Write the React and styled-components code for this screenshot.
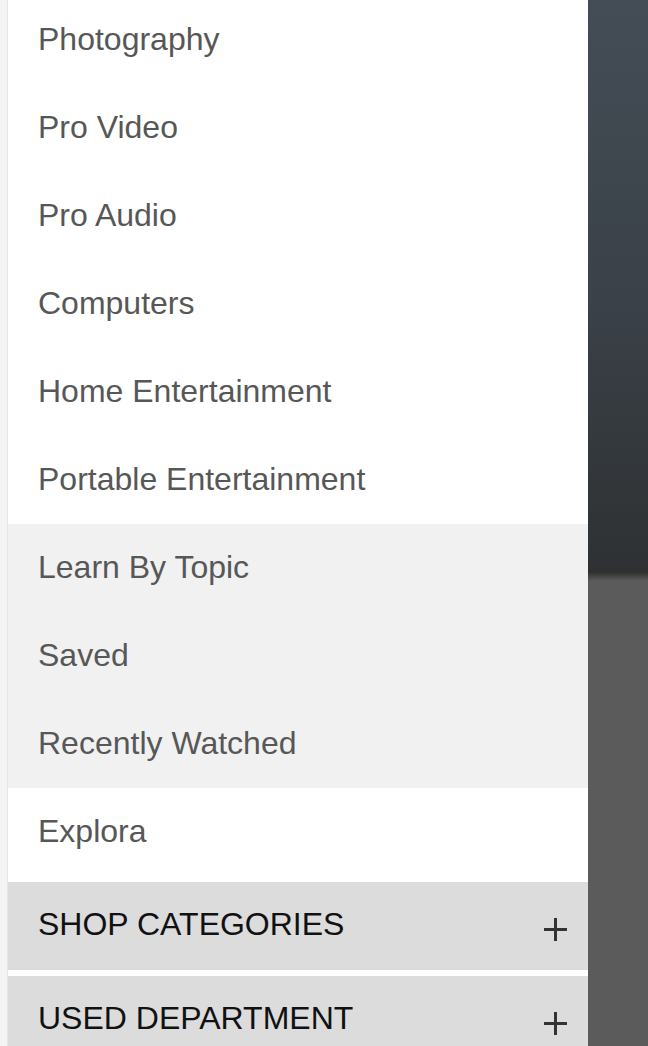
import React from "react";
import styled, { createGlobalStyle } from "styled-components";

const GlobalStyle = createGlobalStyle`
  html, body {
    margin: 0;
    padding: 0;
    overflow: hidden;
    background: #5c5c5c;
  }
`;

const Page = styled.div`
  display: flex;
  height: 1046px;
  overflow: hidden;
  font-family: "Liberation Sans", Arial, sans-serif;
`;

const Edge = styled.div`
  width: 7px;
  flex-shrink: 0;
  background: #f4f4f4;
  border-right: 1px solid #e4e4e4;
`;

const Drawer = styled.nav`
  width: 580px;
  flex-shrink: 0;
  background: #ffffff;
  display: flex;
  flex-direction: column;
  margin-top: -4px;
`;

const Backdrop = styled.div`
  flex: 1;
  background: linear-gradient(
    180deg,
    #444d56 0px,
    #3a4148 300px,
    #2f3234 560px,
    #2e3030 572px,
    #5b5b5b 581px,
    #5b5b5b 100%
  );
`;

const Item = styled.a`
  display: flex;
  align-items: center;
  height: 88px;
  flex-shrink: 0;
  padding: 0 0 2px 30px;
  box-sizing: border-box;
  font-size: 32px;
  color: #575757;
  text-decoration: none;
  background: ${(p) => (p.$muted ? "#f1f1f1" : "#ffffff")};
`;

const Section = styled.div`
  display: flex;
  align-items: center;
  justify-content: space-between;
  height: 88px;
  box-sizing: border-box;
  flex-shrink: 0;
  margin-top: 6px;
  padding: 0 21px 3px 30px;
  background: #dcdcdc;
  font-size: 32px;
  color: #111111;
  text-transform: uppercase;
`;

const PlusIcon = styled.svg`
  width: 23px;
  height: 23px;
  margin-top: 9px;
  stroke: #333333;
  stroke-width: 3;
`;

const Plus = () => (
  <PlusIcon viewBox="0 0 23 23">
    <line x1="11.5" y1="0" x2="11.5" y2="23" />
    <line x1="0" y1="11.5" x2="23" y2="11.5" />
  </PlusIcon>
);

const links = [
  { label: "Photography" },
  { label: "Pro Video" },
  { label: "Pro Audio" },
  { label: "Computers" },
  { label: "Home Entertainment" },
  { label: "Portable Entertainment" },
  { label: "Learn By Topic", muted: true },
  { label: "Saved", muted: true },
  { label: "Recently Watched", muted: true },
  { label: "Explora" },
];

const sections = ["Shop Categories", "Used Department"];

export default function App() {
  return (
    <>
      <GlobalStyle />
      <Page>
        <Edge />
        <Drawer>
          {links.map((l) => (
            <Item key={l.label} href="#" $muted={l.muted}>
              {l.label}
            </Item>
          ))}
          {sections.map((s) => (
            <Section key={s}>
              <span>{s}</span>
              <Plus />
            </Section>
          ))}
        </Drawer>
        <Backdrop />
      </Page>
    </>
  );
}
